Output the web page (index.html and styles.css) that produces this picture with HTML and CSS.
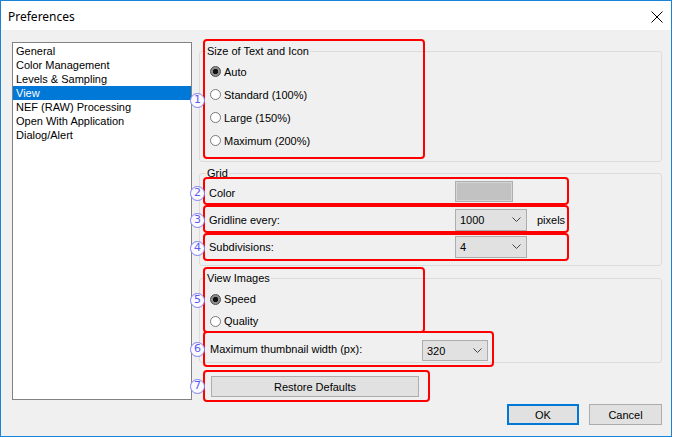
FILE: index.html
```html
<!DOCTYPE html>
<html>
<head>
<meta charset="utf-8">
<title>Preferences</title>
<link rel="stylesheet" href="styles.css">
</head>
<body>
<div class="window">
  <div class="titlebar">
    <span class="title">Preferences</span>
    <svg class="close" width="12" height="12" viewBox="0 0 12 12"><path d="M0.5 0.5 L11.5 11.5 M11.5 0.5 L0.5 11.5" stroke="#000" stroke-width="1" fill="none"/></svg>
  </div>
  <div class="main">
    <ul class="list">
      <li>General</li>
      <li>Color Management</li>
      <li>Levels &amp; Sampling</li>
      <li class="sel">View</li>
      <li>NEF (RAW) Processing</li>
      <li>Open With Application</li>
      <li>Dialog/Alert</li>
    </ul>
    <div class="panel">
      <div class="group g1">
        <span class="glabel">Size of Text and Icon</span>
        <div class="radio on"><span class="dot"></span>Auto</div>
        <div class="radio"><span class="dot"></span>Standard (100%)</div>
        <div class="radio"><span class="dot"></span>Large (150%)</div>
        <div class="radio"><span class="dot"></span>Maximum (200%)</div>
      </div>
      <div class="group g2">
        <span class="glabel">Grid</span>
        <div class="row"><span class="lbl w246">Color</span><span class="swatch"></span></div>
        <div class="row"><span class="lbl w246">Gridline every:</span><span class="select s72">1000<svg width="9" height="5" viewBox="0 0 9 5"><path d="M0.5 0.5 L4.5 4.5 L8.5 0.5" stroke="#444" fill="none"/></svg></span><span class="unit">pixels</span></div>
        <div class="row"><span class="lbl w246">Subdivisions:</span><span class="select s72">4<svg width="9" height="5" viewBox="0 0 9 5"><path d="M0.5 0.5 L4.5 4.5 L8.5 0.5" stroke="#444" fill="none"/></svg></span></div>
      </div>
      <div class="group g3">
        <span class="glabel">View Images</span>
        <div class="radio r22 on"><span class="dot"></span>Speed</div>
        <div class="radio r22"><span class="dot"></span>Quality</div>
        <div class="row thumb"><span class="lbl w212">Maximum thumbnail width (px):</span><span class="select s66">320<svg width="9" height="5" viewBox="0 0 9 5"><path d="M0.5 0.5 L4.5 4.5 L8.5 0.5" stroke="#444" fill="none"/></svg></span></div>
      </div>
      <button class="btn restore">Restore Defaults</button>
    </div>
  </div>
  <div class="footer">
    <button class="btn ok">OK</button>
    <button class="btn cancel">Cancel</button>
  </div>

  <div class="mark m1"></div>
  <div class="mark m2"></div>
  <div class="mark m3"></div>
  <div class="mark m4"></div>
  <div class="mark m5"></div>
  <div class="mark m6"></div>
  <div class="mark m7"></div>

  <span class="num n1">1</span>
  <span class="num n2">2</span>
  <span class="num n3">3</span>
  <span class="num n4">4</span>
  <span class="num n5">5</span>
  <span class="num n6">6</span>
  <span class="num n7">7</span>
</div>
</body>
</html>
```
FILE: styles.css
```css
* { box-sizing: border-box; }
html, body { margin: 0; padding: 0; background: #fff; }
body {
  font-family: "Liberation Sans", Arial, sans-serif;
  font-size: 11px;
  color: #000;
}
.window {
  position: relative;
  width: 672px;
  height: 437px;
  border: 1px solid #1883d7;
  background: #f0f0f0;
  display: flex;
  flex-direction: column;
}
.titlebar {
  height: 29px;
  background: #fff;
  display: flex;
  align-items: center;
  justify-content: space-between;
  padding: 0 8px 0 7px;
}
.title {
  font-family: "Segoe UI", "Noto Sans", sans-serif;
  font-size: 12px;
  margin-top: 1px;
}
.close { display: block; margin-top: 2px; }
.main {
  display: flex;
  align-items: flex-start;
  height: 370px;
  padding: 12px 9px 0 11px;
}
.list {
  list-style: none;
  margin: 0;
  padding: 1px 0 0 0;
  width: 180px;
  height: 358px;
  background: #fff;
  border: 1px solid #828282;
}
.list li {
  height: 14px;
  line-height: 14px;
  padding-left: 3px;
}
.list li.sel { background: #0078d7; color: #fff; }
.panel {
  width: 463px;
  margin: 9px 0 0 7px;
  display: flex;
  flex-direction: column;
}
.group {
  position: relative;
  border: 1px solid #dcdcdc;
  border-radius: 3px;
}
.glabel {
  position: absolute;
  top: -8px;
  left: 6px;
  padding: 0 1px;
  background: #f0f0f0;
  line-height: 14px;
}
.g1 { height: 111px; padding: 8px 0 0 10px; }
.g2 { height: 93px; margin-top: 11px; padding: 5px 0 0 9px; }
.g3 { height: 85px; margin-top: 12px; padding: 9px 0 0 10px; }
.radio {
  height: 23px;
  display: flex;
  align-items: center;
  gap: 3px;
}
.radio.r22 { height: 22px; }
.dot {
  width: 11px;
  height: 11px;
  border-radius: 50%;
  border: 1px solid #7a7a7a;
  background: #fff;
  flex: none;
}
.radio.on .dot {
  border-color: #4a4a4a;
  background: radial-gradient(circle, #111 0 2.4px, #8e8e8e 3px);
}
.row {
  height: 27px;
  display: flex;
  align-items: center;
}
.row.thumb { height: 26px; margin-top: 4px; }
.lbl { flex: none; }
.w246 { width: 246px; }
.w212 { width: 212px; }
.swatch {
  width: 58px;
  height: 21px;
  border: 1px solid #adadad;
  background: #c2c2c2;
  box-shadow: inset 0 0 0 1px #d6d6d6;
  margin-top: -3px;
}
.select {
  height: 22px;
  background: #e1e1e1;
  border: 1px solid #adadad;
  display: flex;
  align-items: center;
  justify-content: space-between;
  padding: 0 5px 0 4px;
}
.select svg { display: block; }
.s72 { width: 72px; }
.s66 { width: 66px; height: 21px; margin-top: 3px; }
.unit { margin-left: 10px; }
.btn {
  font-family: "Liberation Sans", Arial, sans-serif;
  font-size: 11px;
  color: #000;
  background: #e1e1e1;
  border: 1px solid #adadad;
  height: 21px;
  padding: 0;
  margin: 0;
}
.restore { width: 208px; margin: 13px 0 0 12px; }
.footer {
  display: flex;
  justify-content: flex-end;
  gap: 10px;
  padding: 4px 9px 0 0;
}
.ok { width: 72px; border: 2px solid #0078d7; }
.cancel { width: 73px; }

/* annotation overlays */
.mark {
  position: absolute;
  border: 2px solid #f00;
  border-radius: 4px;
}
.m1 { left: 202px; top: 38px; width: 222px; height: 120px; }
.m2 { left: 202px; top: 176px; width: 366px; height: 28px; }
.m3 { left: 202px; top: 204px; width: 366px; height: 28px; }
.m4 { left: 202px; top: 232px; width: 366px; height: 28px; }
.m5 { left: 202px; top: 266px; width: 222px; height: 66px; }
.m6 { left: 202px; top: 330px; width: 291px; height: 36px; }
.m7 { left: 202px; top: 369px; width: 227px; height: 32px; }
.num {
  position: absolute;
  left: 189px;
  width: 15px;
  height: 15px;
  border: 1.5px solid #7f7ff5;
  border-radius: 50%;
  background: #fafaff;
  color: #5c5cf0;
  font-family: "DejaVu Sans", sans-serif;
  font-size: 11px;
  line-height: 12px;
  text-align: center;
}
.n1 { top: 92px; }
.n2 { top: 185px; }
.n3 { top: 212px; }
.n4 { top: 240px; }
.n5 { top: 292px; }
.n6 { top: 341px; }
.n7 { top: 378px; }
```
